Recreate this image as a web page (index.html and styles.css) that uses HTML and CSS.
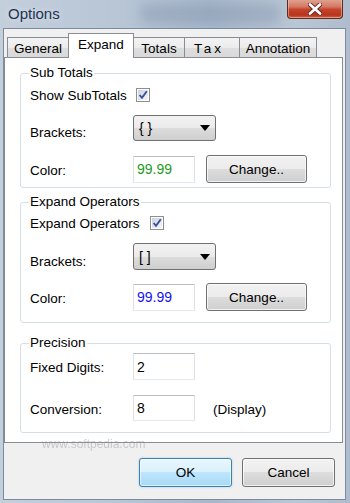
FILE: index.html
```html
<!DOCTYPE html>
<html lang="en">
<head>
	<meta charset="UTF-8">
	<meta name="viewport" content="width=device-width, initial-scale=1.0">
	<title>Options</title>
	<link rel="stylesheet" href="styles.css">
</head>
<body>
	<div class="window">
		<div class="titlebar">
			<span class="title">Options</span>
			<span class="glass"></span>
			<button type="button" class="close">
				<svg width="14" height="12" viewBox="0 0 14 12">
					<path d="M2 1.5 L12 10.5 M12 1.5 L2 10.5" stroke="#5a2018" stroke-width="4.4" stroke-linecap="round"/>
					<path d="M2 1.5 L12 10.5 M12 1.5 L2 10.5" stroke="#fff" stroke-width="2.8" stroke-linecap="round"/>
				</svg>
			</button>
		</div>

		<div class="client">
			<div class="tabs">
				<span class="tab tabGeneral">General</span>
				<span class="tab tabExpand active">Expand</span>
				<span class="tab tabTotals">Totals</span>
				<span class="tab tabTax">Tax</span>
				<span class="tab tabNote">Annotation</span>
			</div>

			<div class="panel">
				<fieldset class="group groupSub">
					<legend>Sub Totals</legend>
					<div class="row rowCheck">
						<span>Show SubTotals</span>
						<span class="check">
							<svg width="14" height="14" viewBox="0 0 14 14">
								<defs>
									<linearGradient id="cb1" x1="0" y1="0" x2="1" y2="1">
										<stop offset="0" stop-color="#cbd3de"/>
										<stop offset="1" stop-color="#f4f6f8"/>
									</linearGradient>
								</defs>
								<rect x="0.5" y="0.5" width="13" height="13" fill="#fff" stroke="#8e8f8f"/>
								<rect x="2" y="2" width="10" height="10" fill="url(#cb1)"/>
								<path d="M3.6 7 L6 9.8 L10.8 3.2" fill="none" stroke="#3a4f99" stroke-width="1.9"/>
							</svg>
						</span>
					</div>
					<div class="row rowCombo">
						<span class="label">Brackets:</span>
						<div class="combo"><span>{ }</span><span class="arrow"></span></div>
					</div>
					<div class="row rowColor">
						<span class="label">Color:</span>
						<div class="field green">99.99</div>
						<button type="button" class="btn change">Change..</button>
					</div>
				</fieldset>

				<fieldset class="group groupOps">
					<legend>Expand Operators</legend>
					<div class="row rowCheck">
						<span>Expand Operators</span>
						<span class="check">
							<svg width="14" height="14" viewBox="0 0 14 14">
								<rect x="0.5" y="0.5" width="13" height="13" fill="#fff" stroke="#8e8f8f"/>
								<rect x="2" y="2" width="10" height="10" fill="url(#cb1)"/>
								<path d="M3.6 7 L6 9.8 L10.8 3.2" fill="none" stroke="#3a4f99" stroke-width="1.9"/>
							</svg>
						</span>
					</div>
					<div class="row rowCombo">
						<span class="label">Brackets:</span>
						<div class="combo"><span>[ ]</span><span class="arrow"></span></div>
					</div>
					<div class="row rowColor">
						<span class="label">Color:</span>
						<div class="field blue">99.99</div>
						<button type="button" class="btn change">Change..</button>
					</div>
				</fieldset>

				<fieldset class="group groupPrec">
					<legend>Precision</legend>
					<div class="row rowDigits">
						<span class="label">Fixed Digits:</span>
						<div class="field">2</div>
					</div>
					<div class="row rowConv">
						<span class="label">Conversion:</span>
						<div class="field">8</div>
						<span class="note">(Display)</span>
					</div>
				</fieldset>
			</div>

			<div class="actions">
				<span class="mark">www.softpedia.com</span>
				<button type="button" class="btn default">OK</button>
				<button type="button" class="btn">Cancel</button>
			</div>
		</div>
	</div>
</body>
</html>
```

FILE: styles.css
```css
* {box-sizing:border-box;}
body {margin:0; width:350px; height:503px; overflow:hidden; font-family:"Liberation Sans", Arial, sans-serif; font-size:13.5px; color:#000;}
button {font:inherit; color:inherit; padding:0; cursor:default;}

.window {position:relative; width:350px; height:503px; background:linear-gradient(to right, #c4cfdc, #b7c5d5 35%, #a8b8cb 60%, #b9c6d5 85%, #aebccd);}

/* title bar */
.titlebar {position:relative; height:28px; display:flex; align-items:flex-start; overflow:hidden;}
.title {position:relative; z-index:1; padding:5px 0 0 8px; font-size:15px; color:#1d3352; text-shadow:0 0 6px rgba(255,255,255,.6);}
.glass {position:absolute; left:140px; top:4px; width:140px; height:20px; border-radius:8px; background:rgba(95,115,145,.22); filter:blur(5px);}
.close {position:relative; margin-left:auto; margin-right:7px; width:56px; height:20px; margin-top:-1px; border:1px solid #5f2a22; border-top:none; border-radius:0 0 4px 4px; display:flex; align-items:center; justify-content:center; background:linear-gradient(#e2a595, #d47a64 40%, #c4442c 55%, #b8331c 85%, #cf6a4a); box-shadow:inset 0 0 0 1px rgba(255,220,200,.45);}

/* client area */
.client {margin:0 4px 0 3px; height:472px; border:1px solid #7d8b9c; background-color:#f0f0f0;}
.tabs {display:flex; align-items:flex-end; padding:4px 0 0 3px; margin-bottom:-1px;}
.tab {height:21px; display:flex; align-items:center; justify-content:center; border:1px solid #898c95; border-bottom:none; margin-right:-1px; background:linear-gradient(#f3f3f3, #ebebeb 50%, #dedede 50%, #d8d8d8);}
.tab.active {position:relative; z-index:1; height:25px; padding-bottom:4px; background:#fff;}
.tabGeneral {width:62px;}
.tabExpand {width:66px;}
.tabTotals {width:52px;}
.tabTax {width:56px; letter-spacing:3px; justify-content:flex-start; padding-left:9px;}
.tabNote {width:78px;}

.panel {position:relative; width:339px; height:386px; background-color:#fff; border:1px solid #898c95; padding-top:7px;}

/* group boxes */
.group {margin:0 11px 0 15px; min-width:0; border:1px solid #d5dfe5; border-radius:3px; padding:0 0 4px 9px;}
.group legend {padding:0 1px; margin-left:-1px; line-height:16px;}
.groupOps {margin-top:6px; padding-bottom:11px;}
.groupPrec {margin-top:12px; padding-bottom:11px;}

.row {display:flex; align-items:center;}
.label {width:103px; flex:none;}
.rowCheck {height:20px; margin-top:4px;}
.groupOps .rowCheck {margin-top:3px;}
.rowCombo {height:26px; margin-top:10px;}
.groupOps .rowCombo {height:27px;}
.rowCombo .label {padding-top:9px;}
.rowColor {height:28px; margin-top:14px;}
.groupOps .rowColor {margin-top:13px;}
.rowColor .label {padding-top:3px;}
.rowDigits {height:27px; margin-top:2px;}
.rowConv {height:26px; margin-top:15px;}
.rowDigits .label, .rowConv .label {padding-top:2px;}

.check {display:flex; margin-left:9px;}
.groupOps .check {margin-left:10px;}

.combo {width:83px; height:100%; display:flex; align-items:center; padding:0 5px; border:1px solid #707070; border-radius:3px; background:linear-gradient(#f2f2f2, #ebebeb 50%, #dddddd 50%, #cfcfcf); font-size:14px;}
.arrow {margin-left:auto; border-left:5px solid transparent; border-right:5px solid transparent; border-top:6px solid #000;}

.field {width:62px; height:27px; display:flex; align-items:center; padding-left:3px; border:1px solid; border-color:#b9bdc3 #dee2e7 #e3e9ef #dee2e7; background-color:#fff; font-size:14px;}
.rowConv .field {height:26px;}
.green {color:#1e9a1e;}
.blue {color:#1414f0;}
.note {margin-left:18px; padding-top:2px;}

.btn {height:28px; border:1px solid #707070; border-radius:3px; background:linear-gradient(#f2f2f2, #ebebeb 50%, #dddddd 50%, #cfcfcf); box-shadow:inset 0 0 0 1px rgba(255,255,255,.7);}
.change {width:101px; margin-left:11px;}

/* dialog buttons */
.actions {position:relative; display:flex; justify-content:flex-end; gap:10px; padding:15px 10px 0 0;}
.actions .btn {width:93px; height:29px;}
.btn.default {border-color:#3c7fb1; background:linear-gradient(#eaf6fd, #d9f0fc 50%, #bee6fd 50%, #a7d9f5); box-shadow:inset 0 0 0 1px rgba(255,255,255,.6), 0 0 2px rgba(60,160,220,.5);}

/* watermark */
.mark {position:absolute; left:38px; top:-6px; white-space:nowrap; pointer-events:none; font-size:12px; color:rgba(150,150,150,.45); filter:blur(.4px);}
```
